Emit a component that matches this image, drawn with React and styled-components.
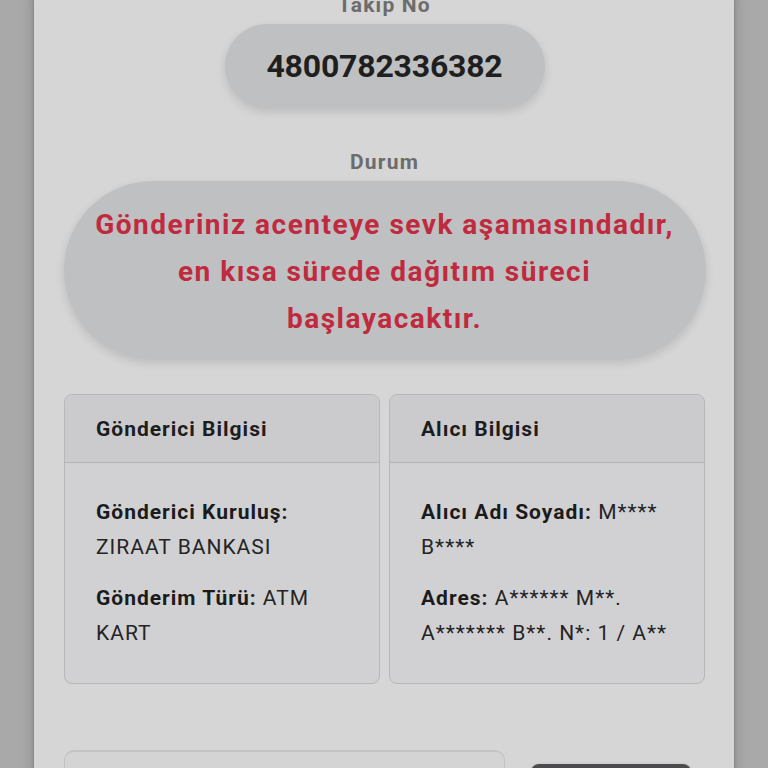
import React from "react";
import styled, { createGlobalStyle } from "styled-components";

const Global = createGlobalStyle`
  html, body { margin: 0; padding: 0; background: #a9a9a9; overflow: hidden; }
  body { font-family: Roboto, "Noto Sans", "Liberation Sans", sans-serif; }
  * { box-sizing: border-box; }
`;

const Page = styled.div`
  width: 768px;
  height: 768px;
  overflow: hidden;
  display: flex;
  justify-content: center;
  background: #a9a9a9;
`;

const Modal = styled.div`
  width: 700px;
  background: #d6d6d6;
  box-shadow: 0 0 12px rgba(0, 0, 0, 0.25), 0 0 2px rgba(0, 0, 0, 0.2);
  padding: 0 29px 0 30px;
  display: flex;
  flex-direction: column;
  align-items: center;
  margin-top: -7px;
  height: 900px;
`;

const Label = styled.div`
  font-size: 21px;
  line-height: 24px;
  font-weight: 700;
  letter-spacing: 1.2px;
  color: #6c6c6c;
  text-align: center;
  margin-top: ${(p) => p.$mt || 0}px;
  margin-bottom: 7px;
`;

const Pill = styled.div`
  background: #bfc0c2;
  border-radius: 999px;
  box-shadow: 0 4px 10px rgba(0, 0, 0, 0.12);
  display: flex;
  align-items: center;
  justify-content: center;
  text-align: center;
  width: ${(p) => p.$w}px;
  min-height: ${(p) => p.$h}px;
  padding: ${(p) => p.$pad || "0"};
`;

const Number = styled.div`
  font-size: 32px;
  font-weight: 700;
  color: #1f1f20;
  letter-spacing: -0.2px;
`;

const Status = styled.div`
  font-size: 28px;
  line-height: 47px;
  font-weight: 700;
  letter-spacing: 1.5px;
  color: #bf2a3e;
  padding-top: 2px;
`;

const Cards = styled.div`
  margin-top: 35px;
  width: 641px;
  display: grid;
  grid-template-columns: 1fr 1fr;
  gap: 9px;
`;

const Card = styled.div`
  border: 1px solid #b7b7b9;
  border-radius: 8px;
  background: #d1d1d3;
  overflow: hidden;
  height: 290px;
`;

const CardHeader = styled.div`
  height: 68px;
  background: #cbcbcd;
  border-bottom: 1px solid #b5b5b7;
  display: flex;
  align-items: center;
  padding: 0 31px;
  font-size: 21px;
  letter-spacing: 1px;
  font-weight: 700;
  color: #1d1d1e;
`;

const CardBody = styled.div`
  padding: 32px 31px 30px;
  display: flex;
  flex-direction: column;
  gap: 16px;
`;

const Line = styled.p`
  margin: 0;
  font-size: 21px;
  line-height: 35px;
  letter-spacing: 1px;
  color: #242425;
  b { font-weight: 700; color: #1b1b1c; }
`;

const Bottom = styled.div`
  margin-top: 66px;
  width: 641px;
  display: flex;
  align-items: flex-start;
  gap: 26px;
`;

const Input = styled.div`
  width: 441px;
  height: 60px;
  border: 1px solid #c2c2c4;
  border-top: 2px solid #c4c4c6;
  border-radius: 10px;
  background: #d4d4d4;
`;

const Button = styled.div`
  margin-top: 14px;
  width: 160px;
  height: 48px;
  border-radius: 8px;
  background: #4b4b4d;
  box-shadow: 0 0 0 2px #cfcfcf;
`;

export default function App() {
  return (
    <>
      <Global />
      <Page>
        <Modal>
          <Label $mt={0}>Takip No</Label>
          <Pill $w={320} $h={84}>
            <Number>4800782336382</Number>
          </Pill>
          <Label $mt={42}>Durum</Label>
          <Pill $w={642} $h={178} $pad="16px 20px">
            <Status>
              Gönderiniz acenteye sevk aşamasındadır,
              <br />
              en kısa sürede dağıtım süreci
              <br />
              başlayacaktır.
            </Status>
          </Pill>
          <Cards>
            <Card>
              <CardHeader>Gönderici Bilgisi</CardHeader>
              <CardBody>
                <Line>
                  <b>Gönderici Kuruluş:</b> ZIRAAT BANKASI
                </Line>
                <Line>
                  <b>Gönderim Türü:</b> ATM KART
                </Line>
              </CardBody>
            </Card>
            <Card>
              <CardHeader>Alıcı Bilgisi</CardHeader>
              <CardBody>
                <Line>
                  <b>Alıcı Adı Soyadı:</b> M**** B****
                </Line>
                <Line>
                  <b>Adres:</b> A****** M**. A******* B**. N*: 1 / A**
                </Line>
              </CardBody>
            </Card>
          </Cards>
          <Bottom>
            <Input />
            <Button />
          </Bottom>
        </Modal>
      </Page>
    </>
  );
}
